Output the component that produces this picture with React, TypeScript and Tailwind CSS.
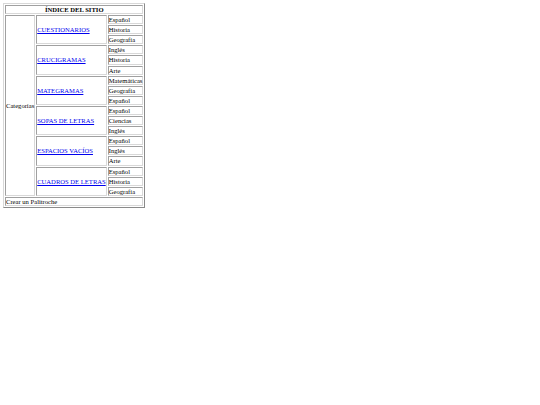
const grupos = [
  { nombre: "CUESTIONARIOS", temas: ["Español", "Historia", "Geografía"] },
  { nombre: "CRUCIGRAMAS", temas: ["Inglés", "Historia", "Arte"] },
  { nombre: "MATEGRAMAS", temas: ["Matemáticas", "Geografía", "Español"] },
  { nombre: "SOPAS DE LETRAS", temas: ["Español", "Ciencias", "Inglés"] },
  { nombre: "ESPACIOS VACÍOS", temas: ["Español", "Inglés", "Arte"] },
  { nombre: "CUADROS DE LETRAS", temas: ["Español", "Historia", "Geografía"] },
];

const celda =
  "border border-t-[#a0a0a0] border-l-[#a0a0a0] border-b-[#d8d8d8] border-r-[#d8d8d8] px-0 py-0 leading-[7.1px]";

export default function App() {
  const total = grupos.length * 3;
  return (
    <div className="p-[3px] bg-white min-h-[405px] font-['Liberation_Serif',serif] text-[6.6px] text-black">
      <table className="border-separate border-spacing-[1px] border border-t-[#d8d8d8] border-l-[#d8d8d8] border-b-[#8a8a8a] border-r-[#8a8a8a]">
        <tbody>
          <tr>
            <th colSpan={3} className={`${celda} font-bold text-center`}>
              ÍNDICE DEL SITIO
            </th>
          </tr>
          {grupos.map((g, gi) =>
            g.temas.map((t, ti) => (
              <tr key={`${gi}-${ti}`}>
                {gi === 0 && ti === 0 && (
                  <td rowSpan={total} className={celda}>
                    Categorías
                  </td>
                )}
                {ti === 0 && (
                  <td rowSpan={3} className={celda}>
                    <a href="#" className="text-[#0000ee] underline">
                      {g.nombre}
                    </a>
                  </td>
                )}
                <td className={`${celda} whitespace-nowrap`}>{t}</td>
              </tr>
            ))
          )}
          <tr>
            <td colSpan={3} className={celda}>
              Crear un Palitroche
            </td>
          </tr>
        </tbody>
      </table>
    </div>
  );
}
